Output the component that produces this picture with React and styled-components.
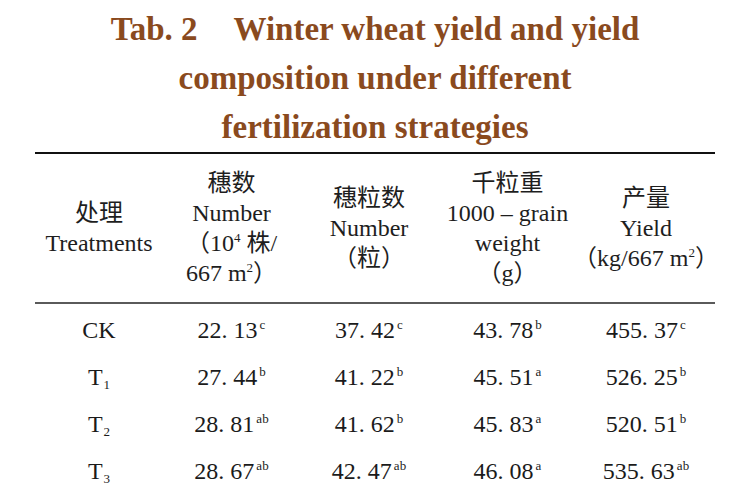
import React from 'react'
import styled, { createGlobalStyle } from 'styled-components'

const GlobalStyle = createGlobalStyle`
  html, body {
    margin: 0;
    background: #ffffff;
  }
  body {
    font-family: "Liberation Serif", "Noto Sans CJK SC", serif;
    color: #1b1b1b;
  }
`

const headers = [
  ['处理', 'Treatments'],
  ['穗数', 'Number', 'unit-plants', 'unit-area'],
  ['穗粒数', 'Number', '（粒）'],
  ['千粒重', '1000 – grain', 'weight', '（g）'],
  ['产量', 'Yield', 'unit-yield'],
]

const rows = [
  { name: 'CK', sub: null, values: [['22. 13', 'c'], ['37. 42', 'c'], ['43. 78', 'b'], ['455. 37', 'c']] },
  { name: 'T', sub: '1', values: [['27. 44', 'b'], ['41. 22', 'b'], ['45. 51', 'a'], ['526. 25', 'b']] },
  { name: 'T', sub: '2', values: [['28. 81', 'ab'], ['41. 62', 'b'], ['45. 83', 'a'], ['520. 51', 'b']] },
  { name: 'T', sub: '3', values: [['28. 67', 'ab'], ['42. 47', 'ab'], ['46. 08', 'a'], ['535. 63', 'ab']] },
]

// a few header lines carry superscripts, so they are written out here
function renderLine(line) {
  if (line === 'unit-plants') return <>（10<Sup>4</Sup> 株/</>
  if (line === 'unit-area') return <>667 m<Sup>2</Sup>）</>
  if (line === 'unit-yield') return <>（kg/667 m<Sup>2</Sup>）</>
  return line
}

const App = () => {
  return (
    <Page>
      <GlobalStyle />
      <Caption>
        <CaptionLine><TabLabel>Tab. 2</TabLabel>Winter wheat yield and yield</CaptionLine>
        <CaptionLine>composition under different</CaptionLine>
        <CaptionLine>fertilization strategies</CaptionLine>
      </Caption>
      <Table>
        <HeadRow>
          {headers.map((lines, i) => (
            <HeadCell key={i}>
              {lines.map((line, j) => (
                <HeadLine key={j}>{renderLine(line)}</HeadLine>
              ))}
            </HeadCell>
          ))}
        </HeadRow>
        <Body>
          {rows.map((row) => (
            <Row key={row.name + (row.sub || '')}>
              <Cell>
                {row.name}
                {row.sub && <Sub>{row.sub}</Sub>}
              </Cell>
              {row.values.map(([value, mark], i) => (
                <Cell key={i}>
                  {value}
                  <Mark>{mark}</Mark>
                </Cell>
              ))}
            </Row>
          ))}
        </Body>
      </Table>
    </Page>
  )
}

const Page = styled.div`
  width: 750px;
  height: 500px;
  overflow: hidden;
`

const Caption = styled.div`
  padding-top: 5px;
  text-align: center;
  color: #8a4a1e;
  font-family: "Liberation Serif", serif;
  font-weight: bold;
  font-size: 33px;
  line-height: 49px;
`

const CaptionLine = styled.div`
  white-space: nowrap;
`

const TabLabel = styled.span`
  margin-right: 36px;
`

const Table = styled.div`
  width: 680px;
  margin: 0 auto;
  border-top: 2px solid #111111;
`

const columns = '128px 137px 138px 139px 138px'

const HeadRow = styled.div`
  display: grid;
  grid-template-columns: ${columns};
  height: 148px;
  align-items: center;
  border-bottom: 2px solid #5a5a5a;
`

const HeadCell = styled.div`
  display: flex;
  flex-direction: column;
  align-items: center;
  font-size: 24px;
  line-height: 30px;
  color: #1e1e1e;
`

const HeadLine = styled.div`
  white-space: nowrap;
`

const Body = styled.div`
  padding-top: 3px;
`

const Row = styled.div`
  display: grid;
  grid-template-columns: ${columns};
  height: 47px;
  align-items: center;
`

const Cell = styled.div`
  text-align: center;
  font-size: 24px;
  line-height: 47px;
  white-space: nowrap;
`

const Sup = styled.span`
  font-size: 13px;
  line-height: 0;
  vertical-align: 9px;
`

const Mark = styled.span`
  font-size: 13px;
  line-height: 0;
  vertical-align: 9px;
  margin-left: 2px;
`

const Sub = styled.span`
  font-size: 13px;
  line-height: 0;
  vertical-align: -4px;
  margin-left: 1px;
`

export default App
